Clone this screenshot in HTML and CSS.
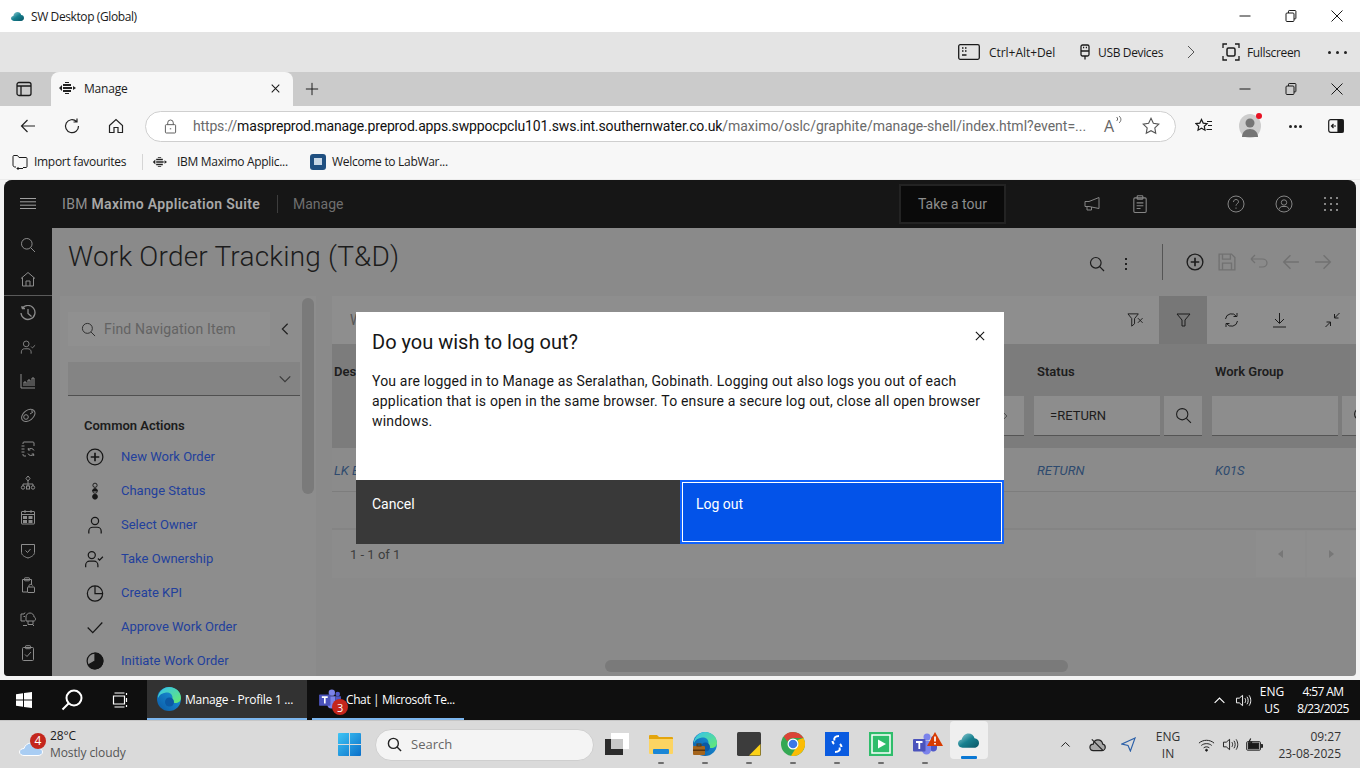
FILE: index.html
```html
<!DOCTYPE html>
<html lang="en">
<head>
  <meta charset="utf-8">
  <title>Manage - Work Order Tracking</title>
  <link rel="stylesheet" href="styles.css">
</head>
<body>
  <svg class="sprite" aria-hidden="true">
    <defs>
      <symbol id="search" viewBox="0 0 16 16"><circle cx="6.8" cy="6.8" r="5.3"/><path d="M10.7 10.7 15 15"/></symbol>
      <symbol id="x" viewBox="0 0 16 16"><path d="M2.5 2.5l11 11M13.5 2.5l-11 11"/></symbol>
      <symbol id="min" viewBox="0 0 16 16"><path d="M2.5 8h11"/></symbol>
      <symbol id="restore" viewBox="0 0 16 16"><rect x="3" y="5" width="8" height="8.5" rx="1"/><path d="M5.5 5V3.2c0-.4.3-.7.7-.7h6c.4 0 .7.3.7.7v7c0 .4-.3.7-.7.7H11"/></symbol>
      <symbol id="plus-c" viewBox="0 0 16 16"><circle cx="8" cy="8" r="7"/><path d="M8 4.2v7.6M4.2 8h7.6" stroke-width="1.5"/></symbol>
      <symbol id="user" viewBox="0 0 16 16"><circle cx="8" cy="4.5" r="3.2"/><path d="M2.5 15.5v-2c0-2 1.6-3.5 3.5-3.5h4c1.9 0 3.5 1.5 3.5 3.5v2"/></symbol>
      <symbol id="user-check" viewBox="0 0 18 16"><circle cx="7" cy="4.5" r="3.2"/><path d="M1.5 15.5v-2c0-2 1.6-3.5 3.5-3.5h4c1.9 0 3.5 1.5 3.5 3.5v2M12.5 7.5l1.5 1.5 3-3"/></symbol>
      <symbol id="clipboard" viewBox="0 0 16 16"><rect x="2.5" y="2.5" width="11" height="13" rx="1"/><rect x="5.5" y=".7" width="5" height="3" rx=".6"/><path d="M5 7h6M5 9.5h6M5 12h3.5"/></symbol>
      <symbol id="clipboard-check" viewBox="0 0 16 16"><rect x="2.5" y="2.5" width="11" height="13" rx="1"/><rect x="5.5" y=".7" width="5" height="3" rx=".6"/><path d="M5 9.5l2 2 4-4.500"/></symbol>
      <symbol id="arrow" viewBox="0 0 16 16"><path d="M15 8H1.5M7.5 2 1.5 8l6 6"/></symbol>
      <symbol id="chev-r" viewBox="0 0 16 16"><path d="M5 2l6 6-6 6"/></symbol>
      <symbol id="chev-d" viewBox="0 0 16 16"><path d="M2 5l6 6 6-6"/></symbol>
      <symbol id="caret-up" viewBox="0 0 16 16"><path d="M2 11l6-6 6 6"/></symbol>
      <symbol id="speaker" viewBox="0 0 18 16"><path d="M1.5 5.5h3L8 2.5v11l-3.5-3h-3zM10.5 5.5c1 1.5 1 3.5 0 5M12.7 4c1.7 2.5 1.700 5.500 0 8M15 2.500c2.300 3.500 2.300 7.500 0 11"/></symbol>
      <symbol id="favicon" viewBox="0 0 18 14"><path d="M1 7l3-3v6zM5 3h8v2H5zM5 6h9v2H5zM5 9h8v2H5zM7 1h4v1H7zM7 12h4v1H7zM15 5l3 2-3 2z" fill="currentColor" stroke="none"/></symbol>
      <symbol id="cloud-app" viewBox="0 0 28 20"><defs><linearGradient id="cloudfill" x1="0" y1="0" x2="1" y2="1"><stop offset="0" stop-color="#9fd6dc"/><stop offset=".5" stop-color="#16808f"/><stop offset="1" stop-color="#0a5565"/></linearGradient></defs><path d="M6 19.5C2.500 19.5 0 17 0 14s2.200-5 5-5.300C6 4 9.500 .5 14 .5c4 0 7 2.500 8 6.500 3.500.2 6 2.700 6 6.200s-2.700 6.300-6 6.300z" fill="url(#cloudfill)" stroke="none"/></symbol>
      <symbol id="edge" viewBox="0 0 24 24"><defs><linearGradient id="edgeb" x1="0" y1="1" x2="1" y2="0"><stop offset="0" stop-color="#0c59a4"/><stop offset="1" stop-color="#1b9de2"/></linearGradient><linearGradient id="edgeg" x1="0" y1="0" x2="1" y2="1"><stop offset="0" stop-color="#35c1f1"/><stop offset="1" stop-color="#66eb6e"/></linearGradient></defs><circle cx="12" cy="12" r="12" fill="url(#edgeb)" stroke="none"/><path d="M1 9C3 3 8 0 12 0c7 0 12 5 12 11 0 3-2.500 5-6 5-2 0-3.500-1-3.500-2.500 0-1 1-1.500 1-3C15.500 7 12 5 9 5.500 5 6 2 8 1 11z" fill="url(#edgeg)" stroke="none"/><circle cx="12.500" cy="15" r="4.500" fill="#0c59a4" stroke="none"/></symbol>
      <symbol id="teams" viewBox="0 0 24 22"><circle cx="14" cy="4" r="3.500" fill="#7b83eb" stroke="none"/><circle cx="20.500" cy="5.500" r="2.500" fill="#5059c9" stroke="none"/><path d="M9 8h9v9c0 2.500-2 4.500-4.500 4.500S9 19.500 9 17z" fill="#7b83eb" stroke="none"/><path d="M18 8h6v7c0 2-1.500 3.500-3.500 3.500-1 0-2-.4-2.500-1z" fill="#5059c9" stroke="none"/><rect x="0" y="6" width="12.500" height="12.500" rx="1" fill="#4b53bc" stroke="none"/><path d="M3 9h6.500M6.300 9v7" stroke="#fff" stroke-width="1.800"/></symbol>
    </defs>
  </svg>

  <header class="titlebar">
    <div class="titlebar-name">
      <svg class="ic-title" viewBox="0 0 28 20"><use href="#cloud-app"/></svg>
      <span>SW Desktop (Global)</span>
    </div>
    <div class="winctrl">
      <svg class="ic"><use href="#min"/></svg>
      <svg class="ic"><use href="#restore"/></svg>
      <svg class="ic"><use href="#x"/></svg>
    </div>
  </header>

  <div class="rdpbar">
    <div class="rdp-item rdp-cad">
      <svg class="ic-cad" viewBox="0 0 22 16"><rect x=".7" y=".7" width="20.600" height="14.600" rx="1.500"/><path d="M4 4h1.500M7 4h1.500M4 7h1.500M7 7h1.500M4 11h4.500" stroke-width="1.600"/></svg>
      <span>Ctrl+Alt+Del</span>
    </div>
    <div class="rdp-item rdp-usb">
      <svg class="ic-usb" viewBox="0 0 10 16"><rect x="1" y="1" width="8" height="11" rx="1.500"/><path d="M3 3.500h1.200M5.800 3.500H7M1 7h8M5 12v3.500"/></svg>
      <span>USB Devices</span>
    </div>
    <svg class="ic rdp-chev"><use href="#chev-r"/></svg>
    <div class="rdp-item rdp-full">
      <svg class="ic-full" viewBox="0 0 18 18"><path d="M1 5V1h4M13 1h4v4M17 13v4h-4M5 17H1v-4"/><rect x="5" y="5" width="8" height="8" rx="1.500" stroke-width="1.500"/></svg>
      <span>Fullscreen</span>
    </div>
    <div class="dots-wide"><i></i><i></i><i></i></div>
  </div>

  <div class="tabstrip">
    <svg class="ic-side" viewBox="0 0 16 16"><rect x="1" y="1.500" width="14" height="13" rx="2"/><path d="M1 5h14M5 5v9.500"/></svg>
    <div class="tab">
      <svg class="ic-fav"><use href="#favicon"/></svg>
      <span class="tab-name">Manage</span>
      <svg class="ic-tabx"><use href="#x"/></svg>
    </div>
    <svg class="ic-plus" viewBox="0 0 16 16"><path d="M8 1v14M1 8h14"/></svg>
    <div class="winctrl">
      <svg class="ic"><use href="#min"/></svg>
      <svg class="ic"><use href="#restore"/></svg>
      <svg class="ic"><use href="#x"/></svg>
    </div>
  </div>

  <div class="addressbar">
    <svg class="ic-nav ic-back"><use href="#arrow"/></svg>
    <svg class="ic-nav ic-reload" viewBox="0 0 16 16"><path d="M12.500 3.500A6.500 6.500 0 1 0 14.500 8M13 .5v3.500H9.500"/></svg>
    <svg class="ic-nav ic-home" viewBox="0 0 16 16"><path d="M1.500 7.500 8 1.500l6.500 6v7h-4.500v-5h-4v5H1.500z"/></svg>
    <div class="urlbox">
      <svg class="ic-lock" viewBox="0 0 14 16"><rect x="1.500" y="6" width="11" height="9" rx="1"/><path d="M4 6V4a3 3 0 0 1 6 0v2"/><path d="M7 10v1" stroke-width="1.500"/></svg>
      <div class="url"><span class="url-dim">https://</span><span class="url-host">maspreprod.manage.preprod.apps.swppocpclu101.sws.int.southernwater.co.uk</span><span class="url-path">/maximo/oslc/graphite/manage-shell/index.html?event=...</span></div>
      <span class="readaloud">A<svg class="ic-waves" viewBox="0 0 6 10"><path d="M1 1c1.500 1 1.500 3 0 4M3.500 0c2.500 2 2.500 5 0 7"/></svg></span>
      <svg class="ic-star" viewBox="0 0 16 16"><path d="M8 1.200l2.100 4.400 4.800.7-3.500 3.400.8 4.800L8 12.200l-4.200 2.300.8-4.800L1.100 6.300l4.800-.7z"/></svg>
    </div>
    <svg class="ic-favs" viewBox="0 0 18 16"><path d="M6.500 1.500l1.700 3.600 3.900.5-2.800 2.700.7 3.900-3.500-1.900L3 12.200l.7-3.900L.9 5.600l3.900-.5zM12 3.500h5M13 7.500h4M11.500 11.500H17"/></svg>
    <div class="avatar"><i class="avatar-dot"></i><svg viewBox="0 0 22 24"><circle cx="11" cy="9" r="4.500" fill="#757575"/><path d="M3 23c0-5 3.500-8 8-8s8 3 8 8z" fill="#757575"/></svg></div>
    <div class="dots-tight"><i></i><i></i><i></i></div>
    <svg class="ic-sidebar" viewBox="0 0 16 14"><rect x=".7" y=".7" width="14.600" height="12.600" rx="2"/><rect x="10" y="1" width="5" height="12" fill="currentColor"/><path d="M8 7H3.500M5.500 5 3.500 7l2 2"/></svg>
  </div>

  <div class="favbar">
    <div class="fav fav-import">
      <svg class="ic-folder" viewBox="0 0 16 16"><path d="M1 11V2.500c0-.6.400-1 1-1h3.500l1.500 2h7c.6 0 1 .4 1 1v8c0 .6-.4 1-1 1h-3M1 11c0 1.500 1 2 2 2h1M5 14.500h6M5 14.500l1.500-1.500M5 14.500 6.500 16"/></svg>
      <span>Import favourites</span>
    </div>
    <div class="fav-sep"></div>
    <div class="fav fav-ibm">
      <svg class="ic-fav"><use href="#favicon"/></svg>
      <span>IBM Maximo Applic...</span>
    </div>
    <div class="fav fav-lab">
      <span class="lab-icon"><i></i></span>
      <span>Welcome to LabWar...</span>
    </div>
  </div>

  <div class="app">
    <div class="app-header">
      <svg class="ic-burger" viewBox="0 0 16 12"><path d="M0 .5h16M0 3.800h16M0 7.200h16M0 10.500h16"/></svg>
      <div class="brand">IBM <b>Maximo Application Suite</b></div>
      <div class="brand-sep"></div>
      <div class="brand-app">Manage</div>
      <div class="tour">Take a tour</div>
      <svg class="hd-ic hd-mega" viewBox="0 0 18 16"><path d="M16 1.500v11L6 10.500H2V5.500h4zM4 10.500v3.500h4.500v-3"/></svg>
      <svg class="hd-ic hd-clip"><use href="#clipboard"/></svg>
      <svg class="hd-ic hd-help" viewBox="0 0 18 18"><circle cx="9" cy="9" r="8"/><path d="M6.500 7c0-1.500 1-2.500 2.500-2.500s2.500 1 2.500 2.300c0 1.900-2.500 1.900-2.500 3.900M9 12.500v1.300"/></svg>
      <svg class="hd-ic hd-user" viewBox="0 0 18 18"><circle cx="9" cy="9" r="8"/><circle cx="9" cy="7.500" r="2.700"/><path d="M4 14.500c.5-2 2-3 3-3h4c1 0 2.500 1 3 3"/></svg>
      <svg class="hd-ic hd-grid" viewBox="0 0 16 16"><path d="M1 1h2v2H1zM7 1h2v2H7zM13 1h2v2h-2zM1 7h2v2H1zM7 7h2v2H7zM13 7h2v2h-2zM1 13h2v2H1zM7 13h2v2H7zM13 13h2v2h-2z" fill="currentColor" stroke="none"/></svg>
    </div>

    <div class="app-body">
      <nav class="rail">
        <div class="rail-top">
          <svg class="rail-ic"><use href="#search"/></svg>
          <svg class="rail-ic" viewBox="0 0 16 16"><path d="M1 7.500 8 1.500l7 6M2.500 6.500v8.500h11V6.500M6 15v-5h4v5"/></svg>
        </div>
        <div class="rail-rest">
          <svg class="rail-ic" viewBox="0 0 16 16"><path d="M2 3.500V1M2 3.500h3M2.200 3.500A7 7 0 1 1 1 8M8 4v4.500l3.500 3" stroke-width="1.300"/></svg>
          <svg class="rail-ic"><use href="#user-check"/></svg>
          <svg class="rail-ic" viewBox="0 0 16 16"><path d="M1 1v14h14M4 13V9h2v4M8 13V7h2v6M12 13V5h2v8"/></svg>
          <svg class="rail-ic" viewBox="0 0 16 16"><ellipse cx="8" cy="8.500" rx="7.500" ry="5" transform="rotate(-38 8 8)"/><circle cx="6" cy="10" r="2.300"/><path d="M11 4l2.500 0M10 7l3-2"/></svg>
          <svg class="rail-ic" viewBox="0 0 16 16"><path d="M3 3V2c0-.6.400-1 1-1h9c.6 0 1 .4 1 1v3M6 15H4c-.6 0-1-.4-1-1v-1M1.500 5h3M1.500 8h3M1.500 11h3M14 9.500a3.200 3.200 0 0 0-5.700-.5M8 12.500a3.200 3.200 0 0 0 5.700 .5M8.300 7v2h2M13.700 15v-2h-2"/></svg>
          <svg class="rail-ic" viewBox="0 0 16 16"><path d="M8 1l2 2.500-2 2.500-2-2.500zM8 6v3M3 9h10M3 9v2M13 9v2M8 9v2"/><circle cx="3" cy="12.500" r="1.700"/><circle cx="13" cy="12.500" r="1.700"/><rect x="6.500" y="11" width="3" height="3"/></svg>
          <svg class="rail-ic" viewBox="0 0 16 16"><rect x="1.500" y="2.500" width="13" height="12.500" rx=".5"/><path d="M1.500 5.500h13M5 1v3M11 1v3"/><path d="M3 7h4v3H3zM8.500 7h4v3h-4zM3 11h4v3H3zM8.500 11h4v3h-4z" fill="currentColor" stroke="none"/></svg>
          <svg class="rail-ic" viewBox="0 0 16 16"><path d="M1.500 1.500h13v8c0 2.500-3 4.500-6.500 5.500-3.500-1-6.500-3-6.500-5.500zM5.500 7.500l2 2 3-3.500"/></svg>
          <svg class="rail-ic" viewBox="0 0 16 16"><path d="M7 15H2.500V2.500h9V7"/><rect x="4.500" y=".8" width="5" height="3" rx=".6"/><rect x="7.500" y="10" width="7" height="5.500" rx=".5"/><path d="M9 10V8.500c0-1.500 3.500-1.500 3.500 0"/></svg>
          <svg class="rail-ic" viewBox="0 0 16 16"><path d="M5 10H1V3h3l1-1.500M6 6c0-2.500 2-4 4-4s4 1.500 4 4c1 0 1.500 1 1.500 2S15 10 14 10H6zM8 10v3.500h5V10M5 5.500H3.500M3 14.500h4M13 15l1-1"/></svg>
          <svg class="rail-ic"><use href="#clipboard-check"/></svg>
        </div>
      </nav>

      <div class="content">
        <div class="title-row">
          <h1 class="page-title">Work Order Tracking (T&amp;D)</h1>
          <div class="title-tools">
            <svg class="tt-ic tt-search"><use href="#search"/></svg>
            <svg class="tt-kebab" viewBox="0 0 4 12"><path d="M1 0h2v2H1zM1 5h2v2H1zM1 10h2v2H1z" fill="currentColor" stroke="none"/></svg>
            <div class="tt-sep"></div>
            <svg class="tt-ic tt-add"><use href="#plus-c"/></svg>
            <svg class="tt-ic tt-off" viewBox="0 0 16 16"><path d="M1 1h11l3 3v11H1zM4 1v4.500h7V1M4 15V9h8v6"/></svg>
            <svg class="tt-ic tt-off" viewBox="0 0 18 16"><path d="M1 5h11.500c2.500 0 4.500 1.800 4.500 4s-2 4-4.500 4H9M1 5l4-4M1 5l4 4"/></svg>
            <svg class="tt-ic tt-off"><use href="#arrow"/></svg>
            <svg class="tt-ic tt-off tt-flip"><use href="#arrow"/></svg>
          </div>
        </div>

        <div class="work">
          <aside class="navpanel">
            <div class="find-row">
              <div class="find-box">
                <svg class="find-ic"><use href="#search"/></svg>
                <span>Find Navigation Item</span>
              </div>
              <svg class="find-back"><use href="#chev-r"/></svg>
            </div>
            <div class="nav-select"><svg class="find-back sel-chev"><use href="#chev-d"/></svg></div>
            <h2 class="nav-head">Common Actions</h2>
            <ul class="actions">
              <li><svg class="act-ic"><use href="#plus-c"/></svg><a>New Work Order</a></li>
              <li><svg class="act-ic" viewBox="0 0 16 22"><circle cx="8" cy="4" r="2.600"/><circle cx="8" cy="11" r="2.800"/><path d="M5.200 11a2.800 2.800 0 0 1 5.600 0z" fill="currentColor"/><circle cx="8" cy="18" r="3" fill="currentColor"/></svg><a>Change Status</a></li>
              <li><svg class="act-ic"><use href="#user"/></svg><a>Select Owner</a></li>
              <li><svg class="act-ic act-wide"><use href="#user-check"/></svg><a>Take Ownership</a></li>
              <li><svg class="act-ic" viewBox="0 0 16 16"><circle cx="8" cy="8.500" r="6.800"/><path d="M8 1.700v6.800h6.800"/></svg><a>Create KPI</a></li>
              <li><svg class="act-ic" viewBox="0 0 16 16"><path d="M1.500 8.500l4.500 4.500 8.500-9"/></svg><a>Approve Work Order</a></li>
              <li><svg class="act-ic" viewBox="0 0 16 16"><circle cx="8" cy="8" r="7"/><path d="M8 1a7 7 0 0 1 0 14A7 7 0 0 1 2 11.500L8 8z" fill="currentColor"/></svg><a>Initiate Work Order</a></li>
            </ul>
            <div class="nav-scroll"></div>
          </aside>

          <section class="table">
            <div class="tbl-toolbar">
              <span class="tbl-name">W</span>
              <button class="tb-btn"><svg viewBox="0 0 18 16"><path d="M1 1.500h11l-4 5v5.500l-3 2.500V6.500zM11.500 6l5 5M16.500 6l-5 5"/></svg></button>
              <button class="tb-btn tb-active"><svg viewBox="0 0 16 16"><path d="M1.500 2h13l-5 6v6h-3V8z"/></svg></button>
              <button class="tb-btn"><svg viewBox="0 0 16 16"><path d="M2 7a6 6 0 0 1 11-2.500M14 9a6 6 0 0 1-11 2.500M13.500 1v3.500H10M2.500 15v-3.500H6"/></svg></button>
              <button class="tb-btn"><svg viewBox="0 0 16 16"><path d="M8 1v10M3.500 7 8 11.500 12.500 7M1.500 15h13"/></svg></button>
              <button class="tb-btn tb-last"><svg viewBox="0 0 16 16"><path d="M15 1 10 6M10 2v4h4M1 15l5-5M2 10h4v4"/></svg></button>
            </div>
            <div class="tbl-head">
              <div class="col-desc">Des</div>
              <div class="col">Status</div>
              <div class="col">Work Group</div>
            </div>
            <div class="tbl-filter">
              <div class="col-desc filter-desc"><div class="f-chev"><svg><use href="#chev-r"/></svg></div></div>
              <div class="col f-cell"><div class="f-input">=RETURN</div><div class="f-btn"><svg><use href="#search"/></svg></div></div>
              <div class="col f-cell"><div class="f-input"></div><div class="f-btn"><svg><use href="#search"/></svg></div></div>
            </div>
            <div class="tbl-row">
              <div class="col-desc">LK B</div>
              <div class="col">RETURN</div>
              <div class="col">K01S</div>
            </div>
            <div class="tbl-empty"></div>
            <div class="tbl-foot">
              <span>1 - 1 of 1</span>
              <div class="pager">
                <div class="pg-btn"><i class="pg-left"></i></div>
                <div class="pg-btn"><i class="pg-right"></i></div>
              </div>
            </div>
            <div class="hscroll"><div class="hscroll-thumb"></div></div>
          </section>
        </div>
      </div>
    </div>

    <div class="modal" role="dialog">
      <div class="modal-top">
        <h3 class="modal-title">Do you wish to log out?</h3>
        <svg class="modal-x"><use href="#x"/></svg>
      </div>
      <p class="modal-text">You are logged in to Manage as Seralathan, Gobinath. Logging out also logs you out of each application that is open in the same browser. To ensure a secure log out, close all open browser windows.</p>
      <div class="modal-btns">
        <button class="btn-cancel">Cancel</button>
        <button class="btn-logout">Log out</button>
      </div>
    </div>
  </div>

  <div class="remote-bar">
    <svg class="rb-win" viewBox="0 0 16 16"><path d="M0 2.200 7 1.200V7.500H0zM8 1l8-1v7.500H8zM0 8.500h7v6.300l-7-1zM8 8.500h8V16l-8-1.100z" fill="#fff"/></svg>
    <svg class="rb-search" viewBox="0 0 22 22"><circle cx="13" cy="9" r="7.500"/><path d="M7.500 14.500 1.500 20.500"/></svg>
    <svg class="rb-view" viewBox="0 0 16 16"><path d="M2 1h10M2 15h10M1 4h11v8H1zM14 1v2M14 6v4M14 13v2" stroke-width="1.200"/></svg>
    <div class="rb-app rb-active">
      <svg class="rb-edge"><use href="#edge"/></svg>
      <span>Manage - Profile 1 ...</span>
    </div>
    <div class="rb-app rb-teams">
      <span class="rb-teams-ic"><svg><use href="#teams"/></svg><b class="badge badge-3">3</b></span>
      <span>Chat | Microsoft Te...</span>
    </div>
    <div class="rb-tray">
      <svg class="rb-caret"><use href="#caret-up"/></svg>
      <svg class="rb-speaker"><use href="#speaker"/></svg>
      <div class="rb-lang">ENG<br>US</div>
      <div class="rb-clock">4:57 AM<br>8/23/2025</div>
    </div>
  </div>

  <footer class="taskbar">
    <div class="tk-weather">
      <span class="tk-cloud">
        <svg viewBox="0 0 24 16"><path d="M5 15.500c-2.500 0-4.500-1.500-4.500-3.500S2.500 8.500 5 8.500C6 5 9 3 12 3c3.500 0 6 2 7 5 2.500.2 4.500 2 4.500 4s-2 3.500-4.500 3.500z" fill="#a9cdf3" stroke="#fff"/></svg>
        <b class="badge badge-4">4</b>
      </span>
      <div class="tk-temp"><span>28°C</span><span class="tk-sky">Mostly cloudy</span></div>
    </div>
    <svg class="tk-start" viewBox="0 0 24 24"><defs><linearGradient id="startg" x1="0" y1="0" x2="1" y2="1"><stop offset="0" stop-color="#3ec5f5"/><stop offset="1" stop-color="#0a6fc9"/></linearGradient></defs><path d="M0 1a1 1 0 0 1 1-1h10.500v11.500H0zM12.500 0H23a1 1 0 0 1 1 1v10.500H12.500zM0 12.500h11.500V24H1a1 1 0 0 1-1-1zM12.500 12.500H24V23a1 1 0 0 1-1 1H12.500z" fill="url(#startg)"/></svg>
    <div class="tk-search">
      <svg><use href="#search"/></svg>
      <span>Search</span>
    </div>
    <div class="tk-apps">
      <div class="tk-app tk-nodot"><svg viewBox="0 0 24 22"><rect x="6" y="0" width="18" height="16" fill="#fff"/><rect x="0" y="6" width="18" height="16" fill="#2b2b2b"/><rect x="6" y="6" width="12" height="10" fill="#c8c8c8"/></svg></div>
      <div class="tk-app"><svg viewBox="0 0 24 20"><path d="M0 2a1 1 0 0 1 1-1h7l2 2h13a1 1 0 0 1 1 1v3H0z" fill="#e4a50d"/><path d="M0 5h24v14a1 1 0 0 1-1 1H1a1 1 0 0 1-1-1z" fill="#fcd462"/><rect x="4" y="15" width="16" height="5" rx="1" fill="#1a86d6"/></svg></div>
      <div class="tk-app"><svg viewBox="0 0 24 24"><use href="#edge"/><rect x="0" y="14" width="12" height="9" rx="1" fill="#a5651c"/><rect x="0" y="17.500" width="12" height="1.500" fill="#5c340a"/><rect x="4" y="12" width="4" height="2" fill="none" stroke="#5c340a"/></svg></div>
      <div class="tk-app"><svg viewBox="0 0 22 22"><rect width="22" height="22" rx="1.500" fill="#3c3c3c"/><path d="M11 21.500 21.500 11v10.500z" fill="#fcd116"/></svg></div>
      <div class="tk-app"><svg viewBox="0 0 24 24"><circle cx="12" cy="12" r="12" fill="#34a853"/><path d="M12 0a12 12 0 0 1 10.400 6H12a6 6 0 0 0-5.500 3.500L2.700 4.400A12 12 0 0 1 12 0z" fill="#db4437"/><path d="M22.400 6A12 12 0 0 1 10 23.800l4.800-7.500A6 6 0 0 0 16.500 8z" fill="#fbbc05"/><circle cx="12" cy="12" r="5.500" fill="#fff"/><circle cx="12" cy="12" r="4.300" fill="#3b78e7"/></svg></div>
      <div class="tk-app"><svg viewBox="0 0 24 24"><rect width="24" height="24" fill="#0a5be0"/><path d="M14 4c-4 0-5.500 2-4.500 4.500M10 20c4 0 5.500-2 4.500-4.500M9 12c-1-1-1.500-2-1.500-3M15 12c1 1 1.500 2 1.500 3" stroke="#fff" stroke-width="2" fill="none"/></svg></div>
      <div class="tk-app"><svg viewBox="0 0 24 24"><rect width="24" height="24" fill="#2fbd6b"/><rect x="3" y="3" width="18" height="18" fill="none" stroke="#fff" stroke-width="1.500"/><path d="M9 7.500 17 12l-8 4.500z" fill="#fff"/></svg></div>
      <div class="tk-app tk-teams"><svg><use href="#teams"/></svg><svg class="tk-warn" viewBox="0 0 16 14"><path d="M8 0l8 14H0z" fill="#d83b01"/><path d="M8 4.500v5M8 11v1.500" stroke="#fff" stroke-width="1.700"/></svg></div>
      <div class="tk-app tk-current"><svg><use href="#cloud-app"/></svg></div>
    </div>
    <div class="tk-tray">
      <svg class="tk-caret"><use href="#caret-up"/></svg>
      <svg class="tk-cloudoff" viewBox="0 0 18 14"><path d="M4.500 13C2.500 13 1 11.500 1 9.500S2.500 6 4.500 6C5 3 7 1.500 9.500 1.500S14 3 14.500 6c1.500.2 2.700 1.500 2.700 3.300S15.500 13 13.500 13z" fill="#a8a8a8" stroke="#222" stroke-width="1.300"/><path d="M3 1l12 12" stroke="#222" stroke-width="1.300"/></svg>
      <svg class="tk-loc" viewBox="0 0 16 16"><path d="M15 1 1 7.500l6.500 1.500L10 15z"/></svg>
      <div class="tk-lang">ENG<br>IN</div>
      <svg class="tk-wifi" viewBox="0 0 18 14"><path d="M1 5c4.500-4 11.500-4 16 0M3.500 7.500c3-2.600 8-2.600 11 0M6 10c1.700-1.400 4.300-1.400 6 0"/><circle cx="9" cy="12.500" r="1" fill="currentColor"/></svg>
      <svg class="tk-speaker"><use href="#speaker"/></svg>
      <svg class="tk-batt" viewBox="0 0 18 14"><rect x=".7" y="3.500" width="14.600" height="9" rx="1"/><rect x="2.500" y="5" width="11" height="6" fill="currentColor"/><path d="M16 6.500h1.500v3H16" fill="currentColor"/><path d="M5 0 3 4h3L5 7" stroke-width="1.200"/></svg>
      <div class="tk-clock">09:27<br>23-08-2025</div>
    </div>
  </footer>
</body>
</html>
```
FILE: styles.css
```css
* {
  box-sizing: border-box;
}

html, body {
  margin: 0;
  padding: 0;
}

body {
  width: 1360px;
  height: 768px;
  overflow: hidden;
  display: flex;
  flex-direction: column;
  font-family: "Open Sans", "Noto Sans", sans-serif;
  font-size: 12px;
  color: #1a1a1a;
  background-color: #f3f3f3;
}

svg {
  display: block;
  flex: none;
  fill: none;
  stroke: currentColor;
  stroke-width: 1;
}

.sprite {
  position: absolute;
  width: 0;
  height: 0;
}

/* browser chrome */
.titlebar {
  height: 32px;
  flex: none;
  display: flex;
  align-items: center;
  justify-content: space-between;
  background-color: #fff;
}

.titlebar-name {
  display: flex;
  align-items: center;
  gap: 7px;
  padding-left: 11px;
  letter-spacing: -0.4px;
}

.ic-title {
  width: 13px;
  height: 11px;
}

.winctrl {
  display: flex;
  gap: 30px;
  padding-right: 15px;
  margin-left: auto;
}

.ic {
  width: 16px;
  height: 16px;
}

.rdpbar {
  height: 40px;
  flex: none;
  display: flex;
  align-items: center;
  background-color: #e4e4e4;
  padding-left: 958px;
}

.rdp-item {
  display: flex;
  align-items: center;
  letter-spacing: -0.35px;
}

.rdp-cad { gap: 9px; width: 122px; letter-spacing: -0.05px; }
.rdp-usb { gap: 8px; width: 103px; }
.rdp-full { gap: 7px; width: 106px; }

.ic-cad { width: 22px; height: 16px; stroke-width: 1.3; }
.ic-usb { width: 10px; height: 16px; stroke-width: 1.3; }
.ic-full { width: 18px; height: 18px; stroke-width: 1.3; }

.rdp-chev {
  color: #555;
  margin-right: 23px;
}

.dots-wide {
  display: flex;
  gap: 5px;
}

.dots-wide i, .dots-tight i {
  width: 3px;
  height: 3px;
  border-radius: 50%;
  background-color: #222;
}

.tabstrip {
  height: 34px;
  flex: none;
  display: flex;
  align-items: flex-end;
  background-color: #cbcbcb;
  padding-left: 16px;
}

.tabstrip > svg, .tabstrip > .winctrl {
  align-self: center;
}

.ic-side {
  width: 16px;
  height: 16px;
  stroke-width: 1.3;
  margin-right: 19px;
}

.tab {
  width: 242px;
  height: 34px;
  display: flex;
  align-items: center;
  border-radius: 8px 8px 0 0;
  background-color: #f7f7f7;
  padding: 0 12px 2px 7px;
}

.ic-fav {
  width: 18px;
  height: 14px;
  color: #222;
}

.tab-name {
  margin-left: 8px;
  letter-spacing: -0.2px;
  flex: 1;
}

.ic-tabx {
  width: 11px;
  height: 11px;
  stroke-width: 1.5;
}

.ic-plus {
  width: 14px;
  height: 14px;
  margin-left: 12px;
  stroke-width: 1.1;
}

.addressbar {
  height: 40px;
  flex: none;
  display: flex;
  align-items: center;
  background-color: #f7f7f7;
  padding-left: 20px;
}

.ic-nav {
  width: 16px;
  height: 16px;
  stroke-width: 1.2;
  color: #222;
}

.ic-back { margin-right: 28px; }
.ic-reload { margin-right: 28px; }
.ic-home { margin-right: 21px; }

.urlbox {
  width: 1031px;
  height: 31px;
  display: flex;
  align-items: center;
  background-color: #fff;
  border: 1px solid #cfcfcf;
  border-radius: 16px;
  padding-left: 18px;
}

.ic-lock {
  width: 13px;
  height: 15px;
  color: #555;
}

.url {
  margin-left: 16px;
  width: 891px;
  font-family: "Roboto", sans-serif;
  font-size: 14px;
  letter-spacing: -0.16px;
  white-space: nowrap;
}

.url-dim { color: #6a6a6a; }
.url-host { color: #111; }
.url-path { color: #6a6a6a; letter-spacing: 0; }

.readaloud {
  position: relative;
  font-size: 16px;
  color: #666;
  margin-left: 20px;
  width: 22px;
}

.ic-waves {
  position: absolute;
  left: 11px;
  top: 1px;
  width: 7px;
  height: 10px;
}

.ic-star {
  width: 18px;
  height: 18px;
  color: #555;
  margin-left: 16px;
}

.ic-favs {
  width: 18px;
  height: 16px;
  margin-left: 19px;
  stroke-width: 1.2;
}

.avatar {
  position: relative;
  width: 22px;
  height: 24px;
  margin-left: 26px;
  border-radius: 50%;
  background-color: #cdcdcd;
}

.avatar svg {
  width: 22px;
  height: 24px;
  stroke: none;
}

.avatar-dot {
  position: absolute;
  right: -1px;
  top: -1px;
  width: 6px;
  height: 6px;
  border-radius: 50%;
  background-color: #e81123;
}

.dots-tight {
  display: flex;
  gap: 2px;
  margin-left: 28px;
}

.ic-sidebar {
  width: 16px;
  height: 14px;
  margin-left: 26px;
  stroke-width: 1.2;
}

.favbar {
  height: 34px;
  flex: none;
  display: flex;
  align-items: center;
  background-color: #f7f7f7;
  border-bottom: 1px solid #ececec;
  padding: 0 0 2px 12px;
  letter-spacing: -0.3px;
}

.fav {
  display: flex;
  align-items: center;
}

.fav-import { gap: 6px; width: 130px; }
.fav-ibm { gap: 10px; width: 158px; }
.fav-lab { gap: 6px; }

.fav-ibm .ic-fav {
  width: 15px;
  height: 12px;
}

.ic-folder {
  width: 16px;
  height: 16px;
}

.fav-sep {
  width: 1px;
  height: 16px;
  background-color: #d5d5d5;
  margin-right: 9px;
}

.lab-icon {
  width: 16px;
  height: 16px;
  border-radius: 3px;
  background-color: #1f4f80;
  display: flex;
  align-items: center;
  justify-content: center;
}

.lab-icon i {
  width: 8px;
  height: 7px;
  background-color: #c7d7e6;
}

/* app frame */
.app {
  position: relative;
  height: 496px;
  flex: none;
  margin: 0 4px;
  border-radius: 8px 8px 4px 4px;
  overflow: hidden;
  font-family: "Roboto", sans-serif;
  background-color: #8a8a8a;
}

.app-header {
  height: 48px;
  display: flex;
  align-items: center;
  background-color: #161616;
  color: #a0a0a0;
  padding-left: 16px;
}

.ic-burger {
  width: 16px;
  height: 12px;
  margin-right: 26px;
}

.brand {
  font-size: 14px;
  letter-spacing: 0.32px;
  color: #8f8f8f;
  width: 198px;
  white-space: nowrap;
}

.brand b {
  color: #a8a8a8;
  font-weight: 600;
}

.brand-sep {
  width: 1px;
  height: 18px;
  background-color: #3d3d3d;
  margin-left: 17px;
}

.brand-app {
  font-size: 14px;
  color: #6f6f6f;
  margin-left: 15px;
  width: 606px;
}

.tour {
  width: 107px;
  height: 40px;
  display: flex;
  align-items: center;
  justify-content: center;
  background-color: #0a0a0a;
  border: 2px solid #232323;
  color: #8d8d8d;
  font-size: 14px;
}

.hd-ic {
  width: 18px;
  height: 18px;
  color: #858585;
}

.hd-mega { margin-left: 77px; }
.hd-clip { margin-left: 30px; }
.hd-help { margin-left: 78px; }
.hd-user { margin-left: 30px; }
.hd-grid { margin-left: 30px; width: 16px; height: 16px; }

.app-body {
  display: flex;
  height: 448px;
}

.rail {
  width: 48px;
  flex: none;
  background-color: #161616;
  color: #8c8c8c;
}

.rail-top {
  height: 68px;
  border-bottom: 1px solid #5a5a5a;
  display: flex;
  flex-direction: column;
  align-items: center;
  gap: 18px;
  padding-top: 9px;
}

.rail-rest {
  display: flex;
  flex-direction: column;
  align-items: center;
  gap: 18px;
  padding-top: 9px;
}

.rail-ic {
  width: 16px;
  height: 16px;
}

.content {
  flex: 1;
  min-width: 0;
  display: flex;
  flex-direction: column;
}

.title-row {
  height: 68px;
  flex: none;
  display: flex;
  align-items: flex-start;
  padding-left: 16px;
}

.page-title {
  margin: 11px 0 0;
  width: 1000px;
  font-size: 28px;
  line-height: 36px;
  font-weight: 300;
  letter-spacing: 0.2px;
  color: #1c1c1c;
  white-space: nowrap;
}

.title-tools {
  display: flex;
  align-items: center;
  margin-top: 16px;
  height: 36px;
  margin-left: 21px;
}

.tt-ic {
  width: 18px;
  height: 18px;
  color: #1d1d1d;
  stroke-width: 1.2;
}

.tt-search { width: 16px; height: 16px; margin-top: 4px; }
.tt-kebab { width: 4px; height: 12px; margin: 4px 0 0 19px; color: #222; }

.tt-sep {
  width: 1px;
  height: 36px;
  background-color: #555;
  margin: 0 23px 0 34px;
}

.tt-off {
  color: #717171;
  margin-left: 14px;
}

.tt-flip {
  transform: scaleX(-1);
}

.work {
  flex: 1;
  min-height: 0;
  display: flex;
  padding-left: 8px;
}

.navpanel {
  position: relative;
  width: 256px;
  flex: none;
  background-color: #8d8d8d;
  padding: 16px 0 0 8px;
  overflow: hidden;
}

.find-row {
  display: flex;
  align-items: center;
}

.find-box {
  width: 202px;
  height: 34px;
  display: flex;
  align-items: center;
  gap: 8px;
  padding-left: 13px;
  background-color: #909090;
  color: #636363;
  font-size: 14px;
  letter-spacing: 0.15px;
}

.find-ic {
  width: 15px;
  height: 15px;
  color: #2a2a2a;
}

.find-back {
  width: 14px;
  height: 14px;
  margin-left: 8px;
  color: #222;
  stroke-width: 1.4;
  transform: scaleX(-1);
}

.nav-select {
  width: 232px;
  height: 34px;
  margin-top: 16px;
  display: flex;
  align-items: center;
  background-color: #848484;
  border-bottom: 1px solid #505050;
  padding-left: 210px;
}

.sel-chev {
  margin-left: 0;
  color: #3a3a3a;
  transform: none;
}

.nav-head {
  margin: 22px 0 0 16px;
  font-size: 13px;
  line-height: 16px;
  font-weight: 600;
  color: #1c1c1c;
}

.actions {
  list-style: none;
  margin: 5px 0 0 16px;
  padding: 0;
}

.actions li {
  height: 34px;
  display: flex;
  align-items: center;
}

.actions a {
  font-size: 13px;
  color: #22409c;
  margin-left: 17px;
}

.act-ic {
  width: 18px;
  height: 18px;
  margin: 2px 0 0 2px;
  color: #161616;
  stroke-width: 1.1;
}

.act-wide {
  width: 20px;
  margin-left: 0;
}

.nav-scroll {
  position: absolute;
  top: 2px;
  left: 242px;
  width: 12px;
  height: 196px;
  border-radius: 6px;
  background-color: #7a7a7a;
}

.table {
  position: relative;
  flex: 1;
  min-width: 0;
  margin-left: 16px;
  overflow: hidden;
}

.tbl-toolbar {
  height: 48px;
  display: flex;
  align-items: center;
  background-color: #8e8e8e;
  padding-left: 18px;
  color: #1c1c1c;
}

.tbl-name {
  flex: none;
  font-size: 14px;
  color: #555;
  width: 761px;
}

.tb-btn {
  flex: none;
  width: 48px;
  height: 48px;
  border: 0;
  padding: 0;
  display: flex;
  align-items: center;
  justify-content: center;
  background: transparent;
  color: #1c1c1c;
}

.tb-btn svg {
  width: 17px;
  height: 16px;
}

.tb-active {
  background-color: #777;
}

.tb-last {
  width: 53px;
  padding-left: 5px;
}

.tbl-head, .tbl-filter, .tbl-row {
  display: flex;
}

.col-desc {
  width: 702px;
  flex: none;
  padding-left: 2px;
}

.col {
  width: 178px;
  flex: none;
}

.tbl-head .col, .tbl-row .col {
  padding-left: 3px;
}

.tbl-head {
  height: 52px;
  align-items: center;
  padding-top: 2px;
  background-color: #7c7c7c;
  font-size: 13px;
  font-weight: 600;
  color: #1d1d1d;
}

.tbl-filter {
  height: 52px;
  padding-bottom: 12px;
  background-color: #7c7c7c;
}

.filter-desc {
  display: flex;
  justify-content: flex-end;
  padding-right: 10px;
}

.f-chev {
  width: 24px;
  height: 40px;
  display: flex;
  align-items: center;
  background-color: #8d8d8d;
  border-bottom: 1px solid #555;
}

.f-chev svg {
  width: 10px;
  height: 10px;
  color: #222;
}

.f-cell {
  display: flex;
  gap: 4px;
}

.f-input {
  width: 126px;
  height: 40px;
  display: flex;
  align-items: center;
  padding-left: 16px;
  background-color: #8d8d8d;
  border-bottom: 1px solid #555;
  font-size: 13px;
  color: #1c1c1c;
}

.f-btn {
  width: 38px;
  height: 40px;
  display: flex;
  align-items: center;
  justify-content: center;
  background-color: #8d8d8d;
  border-bottom: 1px solid #555;
}

.f-btn svg {
  width: 17px;
  height: 17px;
  color: #1c1c1c;
}

.tbl-row {
  height: 44px;
  align-items: center;
  padding-top: 2px;
  background-color: #8b8b8b;
  border-bottom: 1px solid #7d7d7d;
  font-size: 13px;
  font-style: italic;
  color: #2e4a6e;
}

.tbl-empty {
  height: 38px;
  background-color: #8a8a8a;
  border-bottom: 2px solid #848484;
}

.tbl-foot {
  height: 48px;
  display: flex;
  align-items: center;
  justify-content: space-between;
  padding-left: 18px;
  background-color: #8c8c8c;
  font-size: 13px;
  color: #3d3d3d;
}

.pager {
  display: flex;
  gap: 2px;
}

.pg-btn {
  width: 49px;
  height: 46px;
  display: flex;
  align-items: center;
  justify-content: center;
  background-color: #8e8e8e;
}

.pg-left, .pg-right {
  width: 0;
  height: 0;
  border-top: 4px solid transparent;
  border-bottom: 4px solid transparent;
}

.pg-left { border-right: 5px solid #777; }
.pg-right { border-left: 5px solid #777; }

.hscroll {
  position: absolute;
  left: 0;
  right: 0;
  bottom: 4px;
  height: 12px;
}

.hscroll-thumb {
  width: 463px;
  height: 12px;
  margin-left: 273px;
  border-radius: 6px;
  background-color: #7a7a7a;
}

/* logout dialog */
.modal {
  position: absolute;
  left: 352px;
  top: 132px;
  width: 648px;
  height: 232px;
  display: flex;
  flex-direction: column;
  background-color: #fff;
}

.modal-top {
  display: flex;
  justify-content: space-between;
  padding: 18px 18px 0 16px;
}

.modal-title {
  margin: 0;
  font-size: 20px;
  line-height: 24px;
  font-weight: 400;
  color: #161616;
}

.modal-x {
  width: 12px;
  height: 12px;
  color: #161616;
  stroke-width: 1.5;
}

.modal-text {
  margin: 17px 16px 0;
  font-size: 14px;
  line-height: 20px;
  letter-spacing: 0.18px;
  color: #161616;
}

.modal-btns {
  display: flex;
  margin-top: auto;
  height: 64px;
}

.modal-btns button {
  flex: 1;
  display: flex;
  align-items: flex-start;
  height: 64px;
  border: 0;
  font-family: inherit;
  font-size: 14px;
  line-height: 20px;
  color: #fff;
  padding: 14px 16px 0;
}

.btn-cancel {
  background-color: #393939;
}

.modal-btns .btn-logout {
  background-color: #0353e9;
  border: 2px solid #0f62fe;
  box-shadow: inset 0 0 0 1px #fff;
  padding: 12px 14px 0;
}

/* remote taskbar */
.remote-bar {
  height: 40px;
  flex: none;
  margin-top: 4px;
  display: flex;
  align-items: stretch;
  background-color: #0f0f0f;
  color: #fff;
  padding-left: 16px;
}

.remote-bar > svg {
  align-self: center;
}

.rb-win {
  width: 16px;
  height: 16px;
  stroke: none;
  margin-right: 29px;
}

.rb-search {
  width: 22px;
  height: 22px;
  stroke-width: 2;
  margin-right: 29px;
}

.rb-view {
  width: 17px;
  height: 16px;
  margin-right: 18px;
}

.rb-app {
  display: flex;
  align-items: center;
  border-bottom: 2px solid #7cb6ee;
}

.rb-active {
  width: 160px;
  gap: 4px;
  padding-left: 10px;
  letter-spacing: -0.25px;
  background-color: #323232;
}

.rb-edge {
  width: 24px;
  height: 24px;
  stroke: none;
}

.rb-teams {
  width: 152px;
  margin-left: 5px;
  gap: 5px;
  padding-left: 7px;
  letter-spacing: -0.4px;
}

.rb-teams-ic {
  position: relative;
  width: 22px;
  height: 20px;
}

.rb-teams-ic svg {
  width: 22px;
  height: 20px;
  stroke: none;
}

.badge {
  position: absolute;
  display: flex;
  align-items: center;
  justify-content: center;
  border-radius: 50%;
  background-color: #c4261d;
  color: #fff;
  font-weight: 400;
  font-size: 11px;
}

.badge-3 {
  width: 16px;
  height: 16px;
  right: -7px;
  bottom: -6px;
}

.badge-4 {
  width: 16px;
  height: 16px;
  right: -3px;
  top: -7px;
  font-size: 12px;
}

.rb-tray {
  display: flex;
  align-items: center;
  margin-left: auto;
  padding-right: 11px;
}

.rb-caret {
  width: 13px;
  height: 13px;
  stroke-width: 1.4;
}

.rb-speaker {
  width: 17px;
  height: 15px;
  margin-left: 9px;
}

.rb-lang {
  width: 32px;
  margin-left: 4px;
  text-align: center;
  line-height: 17px;
}

.rb-clock {
  width: 52px;
  margin-left: 9px;
  text-align: center;
  white-space: nowrap;
  line-height: 17px;
  letter-spacing: -0.6px;
}

/* local taskbar */
.taskbar {
  height: 48px;
  flex: none;
  display: flex;
  align-items: center;
  background-color: #dadada;
  border-top: 1px solid #c6c6c6;
}

.tk-weather {
  width: 338px;
  display: flex;
  align-items: center;
  gap: 7px;
  padding-left: 19px;
}

.tk-cloud {
  position: relative;
  width: 24px;
  height: 16px;
  margin-top: 6px;
}

.tk-cloud svg {
  width: 24px;
  height: 16px;
}

.tk-temp {
  display: flex;
  flex-direction: column;
  margin-top: -2px;
  line-height: 17px;
  letter-spacing: -0.1px;
}

.tk-sky {
  color: #555;
}

.tk-start {
  width: 23px;
  height: 23px;
  stroke: none;
}

.tk-search {
  width: 219px;
  height: 32px;
  margin-left: 14px;
  display: flex;
  align-items: center;
  gap: 9px;
  padding-left: 11px;
  border-radius: 16px;
  border: 1px solid #cfcfcf;
  background-color: #f4f4f4;
  color: #666;
  font-size: 13px;
}

.tk-search span {
  margin-top: -2px;
}

.tk-search svg {
  width: 15px;
  height: 15px;
  color: #222;
  stroke-width: 1.5;
}

.tk-apps {
  display: flex;
  margin-left: 0.5px;
}

.tk-app {
  position: relative;
  width: 44px;
  height: 47px;
  display: flex;
  align-items: center;
  justify-content: center;
  padding-bottom: 2px;
}

.tk-app svg {
  width: 24px;
  height: 24px;
  stroke: none;
}

.tk-app::after {
  content: "";
  position: absolute;
  bottom: 4px;
  left: 19px;
  width: 6px;
  height: 2px;
  border-radius: 1px;
  background-color: #6e6e6e;
}

.tk-nodot::after {
  display: none;
}

.tk-teams svg {
  width: 24px;
  height: 22px;
}

.tk-teams .tk-warn {
  position: absolute;
  left: 24px;
  top: 11px;
  width: 16px;
  height: 14px;
}

.tk-current {
  width: 38px;
  margin-left: 3px;
  background-color: #efefef;
  border-radius: 4px;
  height: 38px;
  padding-bottom: 0;
}

.tk-current::after {
  left: 11px;
  width: 16px;
  height: 3px;
  bottom: 0;
  background-color: #0a78d4;
}

.tk-current svg {
  width: 21px;
  height: 15px;
}

.tk-tray {
  display: flex;
  align-items: center;
  margin-left: auto;
  padding-right: 19px;
}

.tk-caret { width: 11px; height: 11px; stroke-width: 1.4; }
.tk-cloudoff { width: 17px; height: 14px; stroke: none; margin-left: 18px; }
.tk-loc { width: 15px; height: 15px; color: #2a5fa8; margin-left: 15px; stroke-width: 1.2; }

.tk-lang {
  width: 32px;
  margin-left: 16px;
  text-align: center;
  line-height: 17px;
  color: #333;
}

.tk-wifi { width: 17px; height: 14px; margin-left: 14px; }
.tk-speaker { width: 17px; height: 15px; margin-left: 7px; }
.tk-batt { width: 17px; height: 14px; margin-left: 7px; }

.tk-clock {
  width: 70px;
  margin-left: 8px;
  text-align: right;
  line-height: 17px;
  color: #333;
}
```
